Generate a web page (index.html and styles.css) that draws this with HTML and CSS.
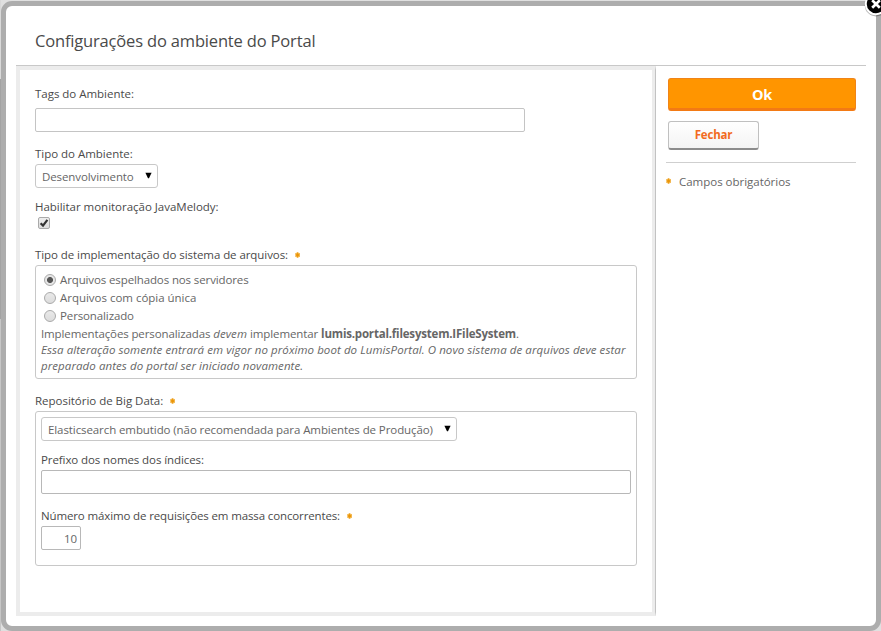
FILE: index.html
```html
<!DOCTYPE html>
<html lang="pt">
<head>
<meta charset="utf-8">
<title>Configurações do ambiente do Portal</title>
<link rel="stylesheet" href="styles.css">
</head>
<body>
<svg class="defs" width="0" height="0" aria-hidden="true">
  <symbol id="star" viewBox="0 0 5 6"><rect x="0.4" y="0.6" width="4.4" height="4.8" rx="1.6" fill="#f5b94e"/><path d="M2.6 0.3v5.4M0.3 1.7l4.6 2.6M4.9 1.7L0.3 4.3" stroke="#e89000" stroke-width="0.8"/></symbol>
  <symbol id="arrow" viewBox="0 0 7 7"><path d="M0.4 0.8h6.2L4 6.2H3z" fill="#000"/></symbol>
</svg>
<div class="dialog">
  <h1 class="title">Configurações do ambiente do Portal</h1>
  <div class="content">
    <form class="panel">
      <div class="field tags">
        <label class="label loose" for="tags">Tags do Ambiente:</label>
        <input class="input wide" id="tags" type="text">
      </div>
      <div class="field env">
        <span class="label loose">Tipo do Ambiente:</span>
        <div class="select env-select"><span class="env-text">Desenvolvimento</span><svg class="arrow"><use href="#arrow"/></svg></div>
      </div>
      <div class="field melody">
        <span class="label loose">Habilitar monitoração JavaMelody:</span>
        <span class="check"><svg viewBox="0 0 10 10"><path d="M1.6 5.2L4 7.6L8.4 1.8" fill="none" stroke="#333" stroke-width="2.2"/></svg></span>
      </div>
      <div class="field files">
        <span class="label impl">Tipo de implementação do sistema de arquivos:<svg class="star"><use href="#star"/></svg></span>
        <div class="box files-box">
          <div class="option"><span class="radio on"></span>Arquivos espelhados nos servidores</div>
          <div class="option loose"><span class="radio"></span>Arquivos com cópia única</div>
          <div class="option"><span class="radio"></span>Personalizado</div>
          <p class="note"><span class="lead">Implementações personalizadas</span> <em>devem</em> implementar <b>lumis.portal.filesystem.IFileSystem</b>.<br><em>Essa alteração somente entrará em vigor no próximo boot do LumisPortal. O novo sistema de arquivos deve estar<br>preparado antes do portal ser iniciado novamente.</em></p>
        </div>
      </div>
      <div class="field">
        <span class="label loose">Repositório de Big Data:<svg class="star"><use href="#star"/></svg></span>
        <div class="box data-box">
          <div class="select data-select"><span>Elasticsearch embutido (não recomendada para Ambientes de Produção)</span><svg class="arrow"><use href="#arrow"/></svg></div>
          <label class="label prefix" for="prefix">Prefixo dos nomes dos índices:</label>
          <input class="input full" id="prefix" type="text">
          <label class="label max" for="max">Número máximo de requisições em massa concorrentes:<svg class="star"><use href="#star"/></svg></label>
          <input class="input number" id="max" type="text" value="10">
        </div>
      </div>
    </form>
    <aside class="side">
      <button class="ok" type="button">Ok</button>
      <button class="cancel" type="button">Fechar</button>
      <div class="required loose"><svg class="star"><use href="#star"/></svg>Campos obrigatórios</div>
    </aside>
  </div>
</div>
<svg class="close" viewBox="0 0 26 26"><circle cx="13" cy="14.2" r="11.2" fill="#000" opacity=".3"/><circle cx="13" cy="13" r="10.2" fill="#000" stroke="#fff" stroke-width="1.9"/><path d="M9.2 9.2l7.6 7.6M16.8 9.2l-7.6 7.6" stroke="#fff" stroke-width="2.7"/></svg>
</body>
</html>
```
FILE: styles.css
```css
* { box-sizing: border-box; }

body {
  margin: 0;
  width: 881px;
  height: 631px;
  overflow: hidden;
  padding: 1px 0 0 1px;
  position: relative;
  background: linear-gradient(#d9d9d9 0 79px, #a3a3a3 79px 319px, #c6c6c6 319px) 0 0 / 1px 100% no-repeat, #e0e0e0;
  font: 11.5px/16px "Open Sans", "Noto Sans", sans-serif;
  letter-spacing: -0.09px;
  color: #666;
}

.defs { position: absolute; }

.dialog {
  width: 880px;
  height: 630px;
  border: 5px solid #adadad;
  border-radius: 11px;
  background: #fff;
  padding: 0 10px;
}

.title {
  margin: 0;
  height: 60px;
  padding: 24px 0 0 19px;
  border-bottom: 1px solid #c8c8c8;
  font-size: 16.5px;
  line-height: 22px;
  font-weight: 400;
  letter-spacing: -0.17px;
  color: #4a4a4a;
}

.content { display: flex; height: 550px; }

.panel {
  width: 640px;
  border: 4px solid #ececec;
  border-right: 1px solid #c2c2c2;
  box-shadow: inset -3px 0 #ececec;
  padding: 16px 18px 0 15px;
}

.label { display: flex; align-items: center; height: 16px; color: #4a4a4a; white-space: nowrap; }
.loose { letter-spacing: -0.02px; }
.impl { letter-spacing: -0.07px; }

.star { width: 5px; height: 6px; margin-left: 7px; flex: none; }

.tags { height: 60px; }
.env { height: 53px; }
.melody { height: 48px; }
.files { height: 146px; }

.input {
  display: block;
  height: 24px;
  border: 1px solid #c4c4c4;
  border-radius: 2px;
  background: #fff;
  font: inherit;
  letter-spacing: inherit;
  color: #666;
  padding: 1px 3px;
  outline: 0;
}
.wide { width: 490px; margin-top: 6px; }
.full { width: 590px; margin-top: 2px; border-color: #b8b8b8; }
.number { width: 40px; margin-top: 2px; text-align: right; border-color: #b8b8b8; }

.select {
  display: flex;
  align-items: center;
  justify-content: space-between;
  height: 24px;
  border: 1px solid #c8c8c8;
  border-radius: 3px;
  padding: 2px 6px 0;
  white-space: nowrap;
}
.env-select { width: 123px; margin-top: 2px; padding-right: 5px; }
.env-text { letter-spacing: -0.1px; }
.data-select { width: 416px; padding: 2px 5px 0 6px; }
.arrow { width: 7px; height: 7px; margin-top: -4px; }

.check {
  display: block;
  width: 12px;
  height: 12px;
  margin: 2px 0 0 3px;
  border: 1px solid #aaa;
  border-radius: 2px;
  background: linear-gradient(#eee, #ddd);
}
.check svg { display: block; width: 10px; height: 10px; }

.box { width: 602px; margin-top: 2px; border: 1px solid #c8c8c8; border-radius: 3px; padding: 5px; }
.files-box { height: 114px; }
.data-box { height: 155px; }

.option { display: flex; align-items: center; height: 18px; padding-left: 3px; }
.option:not(.loose) { letter-spacing: -0.12px; }
.radio {
  width: 12px;
  height: 12px;
  margin-right: 4px;
  border: 1px solid #aaa;
  border-radius: 50%;
  background: linear-gradient(#e9e9e9, #dcdcdc);
}
.radio.on { background: radial-gradient(circle, #555 0 2.6px, #e6e6e6 3.4px); }

.note { margin: 1px 0 0; white-space: nowrap; }
.note em { letter-spacing: 0.07px; }
.note b { letter-spacing: -0.19px; }
.lead { letter-spacing: -0.12px; }

.prefix { margin-top: 11px; }
.max { margin-top: 14px; letter-spacing: -0.13px; }

.side { width: 211px; padding: 12px 11px 0 12px; display: flex; flex-direction: column; align-items: flex-start; }
.side button { font-family: inherit; font-weight: 700; padding: 0; }
.ok {
  width: 188px;
  height: 33px;
  border: 1px solid #f08418;
  border-bottom: 3px solid #f37a14;
  border-radius: 3px;
  background: #ff9500;
  color: #fff;
  font-size: 14.5px;
  letter-spacing: -0.3px;
}
.side .ok { padding-top: 2px; }
.cancel {
  width: 91px;
  height: 29px;
  margin-top: 10px;
  border: 1px solid #c0c0c0;
  border-bottom: 2px solid #8c8c8c;
  border-radius: 3px;
  background: linear-gradient(#fff, #f4f4f4);
  color: #f26a21;
  font-size: 11.5px;
  letter-spacing: -0.2px;
}
.side .cancel { padding-bottom: 2px; }
.required {
  display: flex;
  align-items: center;
  width: 190px;
  height: 28px;
  margin: 12px 0 0 -2px;
  padding-top: 10px;
  border-top: 1px solid #cfcfcf;
}
.required .star { margin: -2px 8px 0 0; }

.close { position: absolute; left: 863px; top: -9px; width: 26px; height: 26px; }
```
